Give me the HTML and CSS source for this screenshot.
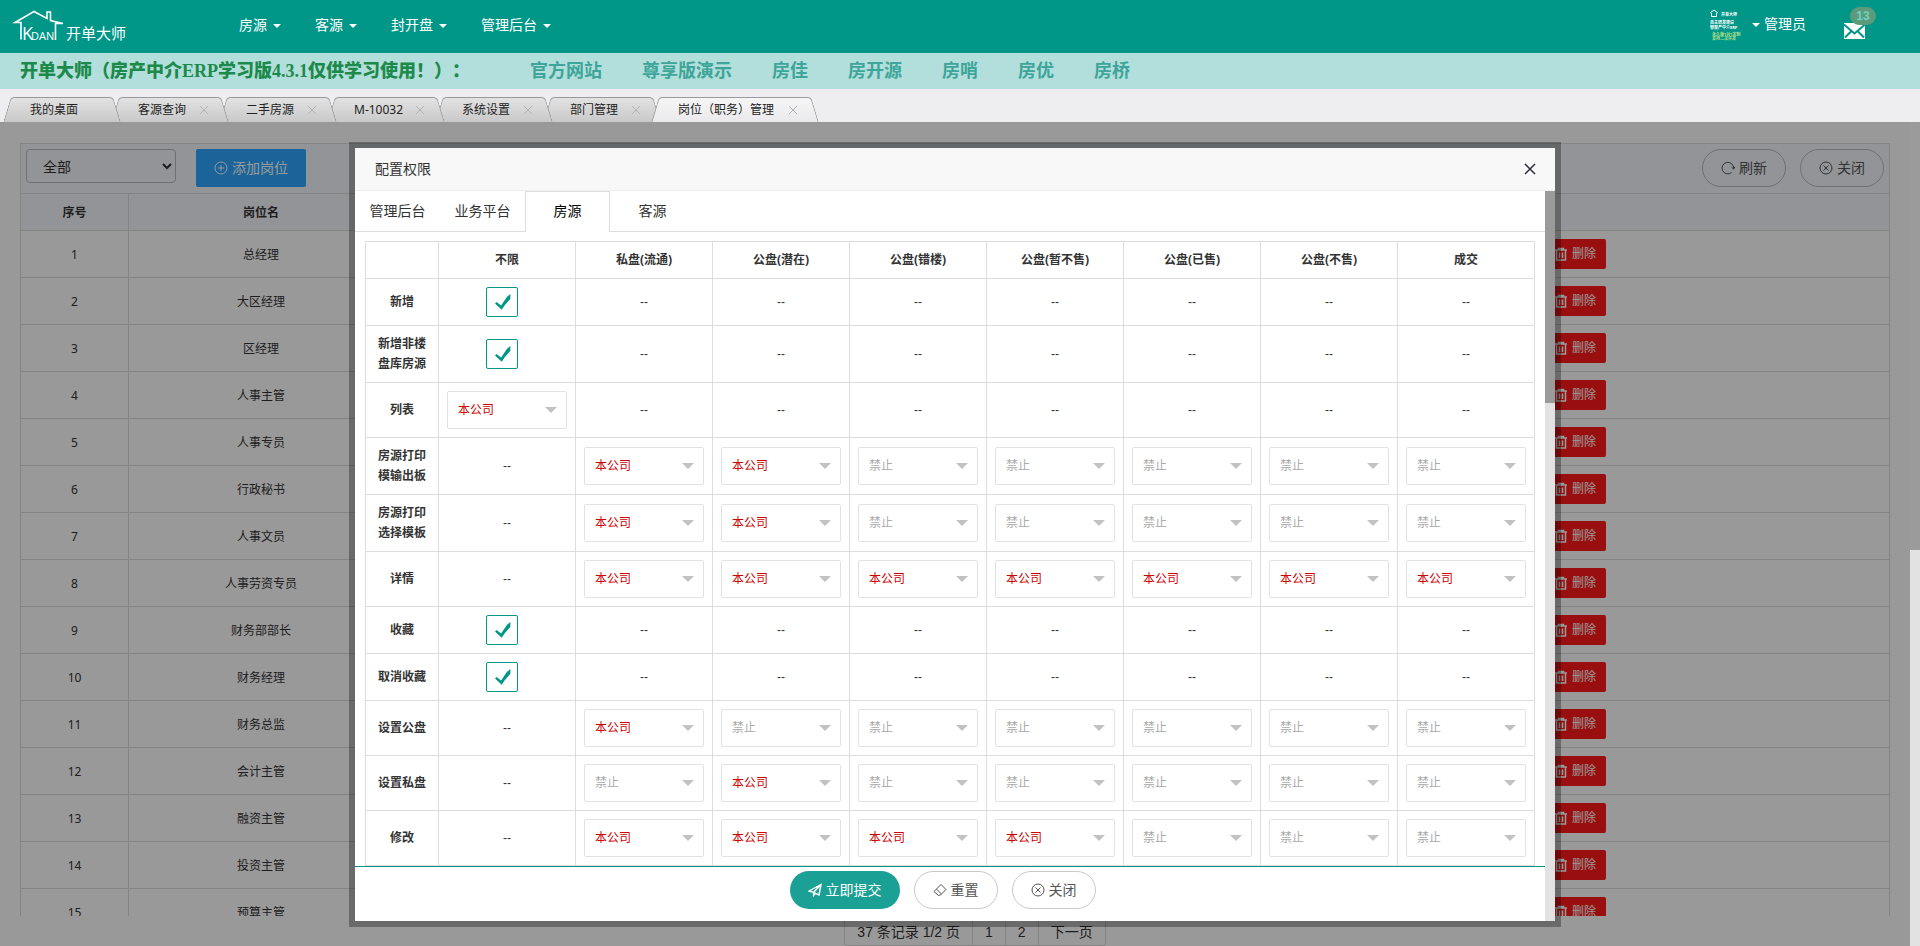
FILE: index.html
```html
<!DOCTYPE html>
<html lang="zh-CN">
<head>
    <meta charset="UTF-8">
    <meta name="viewport" content="width=device-width, initial-scale=1.0">
    <title>开单大师</title>
    <link rel="stylesheet" href="styles.css">
</head>
<body>
    <svg class="sprite" aria-hidden="true">
        <symbol id="i-add" viewBox="0 0 14 14"><circle cx="7" cy="7" r="6"/><path d="M7 4v6M4 7h6"/></symbol>
        <symbol id="i-refresh" viewBox="0 0 14 14"><path d="M10.5 11.6A5.8 5.8 0 1 1 12.6 7.6M10.6 6.2l2 1.9 1.3-2.3"/></symbol>
        <symbol id="i-close" viewBox="0 0 14 14"><circle cx="7" cy="7" r="6"/><path d="M4.5 4.5l5 5M9.5 4.5l-5 5"/></symbol>
        <symbol id="i-send" viewBox="0 0 14 14"><path d="M1 8L13 1.5 11 12 7.5 10.3 5.6 12.5V9.200zM5.6 9.2L13 1.5M7.5 10.3L5.6 9.2" stroke-width="1.4"/></symbol>
        <symbol id="i-reset" viewBox="0 0 14 14"><path d="M8 1.5L13 6.500 7.500 12 5.500 12.500 1 8.500zM3.500 6.200L8.500 11"/></symbol>
        <symbol id="i-trash" viewBox="0 0 14 14"><path d="M1 3h12M4.500 3V1.500h5V3M2.500 3.500V13h9V3.500M5.500 5.500v5.500M8.500 5.500v5.500" stroke-width="1.5"/></symbol>
    </svg>

    <header class="header">
        <a class="logo" href="#">
            <svg width="50" height="34" viewBox="0 0 50 34">
                <path d="M7 30.500V13.500H1L20 2.500 33 9.500V3h3.500v8.500L49 14.500H41.500V31" fill="none" stroke="#fff" stroke-width="1.600"/>
                <text x="8" y="31" class="logo-en">K</text>
                <text x="17" y="31" class="logo-en-sm">DAN</text>
            </svg>
            <span>开单大师</span>
        </a>
        <nav class="nav">
            <a href="#">房源<i class="caret"></i></a>
            <a href="#">客源<i class="caret"></i></a>
            <a href="#">封开盘<i class="caret"></i></a>
            <a href="#">管理后台<i class="caret"></i></a>
        </nav>
        <div class="user">
            <svg class="avatar" width="32" height="32" viewBox="0 0 32 32">
                <path d="M1 4l4-3 4 3M2.500 4v3.500h5V4" fill="none" stroke="#fff"/>
                <text x="12" y="7" class="a4">开单大师</text>
                <text x="1" y="15" class="a4">自主研发建设</text>
                <text x="1" y="20" class="a4">智能产中介ERP</text>
                <text x="3" y="27" class="a4 y">永久版1对1定制</text>
                <text x="3" y="31" class="a4 y">支持二次开发</text>
            </svg>
            <a href="#"><i class="caret"></i>管理员</a>
            <a class="mail" href="#" aria-label="消息">
                <svg width="21" height="16" viewBox="0 0 21 16"><path d="M0 0h21v16H0z" fill="#fff"/><path d="M0 1.500l10.500 9 10.500-9M1 14.500l6-6M20 14.500l-6-6" fill="none" stroke="#009688" stroke-width="2"/></svg>
                <span class="badge">13</span>
            </a>
        </div>
    </header>

    <div class="notice">
        <strong>开单大师（房产中介ERP学习版4.3.1仅供学习使用！）：</strong>
        <a href="#">官方网站</a>
        <a href="#">尊享版演示</a>
        <a href="#">房佳</a>
        <a href="#">房开源</a>
        <a href="#">房哨</a>
        <a href="#">房优</a>
        <a href="#">房桥</a>
    </div>

    <div class="tabs">
        <div class="tab"><span>我的桌面</span></div>
        <div class="tab"><span>客源查询</span><button type="button" aria-label="关闭标签"></button></div>
        <div class="tab"><span>二手房源</span><button type="button" aria-label="关闭标签"></button></div>
        <div class="tab"><span>M-10032</span><button type="button" aria-label="关闭标签"></button></div>
        <div class="tab"><span>系统设置</span><button type="button" aria-label="关闭标签"></button></div>
        <div class="tab"><span>部门管理</span><button type="button" aria-label="关闭标签"></button></div>
        <div class="tab active"><span>岗位（职务）管理</span><button type="button" aria-label="关闭标签"></button></div>
    </div>

    <main class="main">
        <div class="frame">
            <div class="page">
                <div class="toolbar">
                    <select aria-label="部门"><option>全部</option></select>
                    <button type="button" class="btn btn-blue"><svg class="icon"><use href="#i-add"/></svg>添加岗位</button>
                    <div class="toolbar-right">
                        <button type="button" class="btn btn-round"><svg class="icon"><use href="#i-refresh"/></svg>刷新</button>
                        <button type="button" class="btn btn-round"><svg class="icon"><use href="#i-close"/></svg>关闭</button>
                    </div>
                </div>
                <div class="list">
                    <table>
                        <thead>
                            <tr><th class="c-no">序号</th><th class="c-name">岗位名</th><th></th><th class="c-op"></th></tr>
                        </thead>
                        <tbody id="jobs"></tbody>
                    </table>
                </div>
                <div class="pager">
                    <span>37 条记录 1/2 页</span><a href="#">1</a><a href="#">2</a><a href="#">下一页</a>
                </div>
            </div>

            <div class="shade">
                <div class="layer">
                    <div class="layer-title">
                        配置权限
                        <button type="button" class="layer-close" aria-label="关闭"><svg width="12" height="12" viewBox="0 0 12 12"><path d="M1 1l10 10M11 1L1 11" stroke="#2d2d3a" stroke-width="1.500"/></svg></button>
                    </div>
                    <div class="layer-body">
                        <form class="perm">
                            <div class="perm-tabs">
                                <a href="#">管理后台</a>
                                <a href="#">业务平台</a>
                                <a href="#" class="on">房源</a>
                                <a href="#">客源</a>
                            </div>
                            <div class="perm-list">
                                <table>
                                    <thead>
                                        <tr>
                                            <th class="c-item"></th><th>不限</th><th>私盘(流通)</th><th>公盘(潜在)</th><th>公盘(错楼)</th><th>公盘(暂不售)</th><th>公盘(已售)</th><th>公盘(不售)</th><th>成交</th>
                                        </tr>
                                    </thead>
                                    <tbody id="perms"></tbody>
                                </table>
                            </div>
                            <div class="perm-foot">
                                <button type="button" class="btn btn-submit"><svg class="icon"><use href="#i-send"/></svg>立即提交</button>
                                <button type="reset" class="btn btn-round"><svg class="icon"><use href="#i-reset"/></svg>重置</button>
                                <button type="button" class="btn btn-round"><svg class="icon"><use href="#i-close"/></svg>关闭</button>
                            </div>
                        </form>
                        <div class="bar"><div class="bar-thumb layer-thumb"></div></div>
                    </div>
                </div>
            </div>
        </div>
        <div class="bar"><div class="bar-thumb page-thumb"></div></div>
    </main>

    <script>
        const jobs = ['总经理', '大区经理', '区经理', '人事主管', '人事专员', '行政秘书', '人事文员', '人事劳资专员',
            '财务部部长', '财务经理', '财务总监', '会计主管', '融资主管', '投资主管', '预算主管'];

        // v: 勾选  -: 无  1: 本公司  0: 禁止
        const perms = [
            ['新增', 'v-------'],
            ['新增非楼盘库房源', 'v-------'],
            ['列表', '1-------'],
            ['房源打印模输出板', '-1100000'],
            ['房源打印选择模板', '-1100000'],
            ['详情', '-1111111'],
            ['收藏', 'v-------'],
            ['取消收藏', 'v-------'],
            ['设置公盘', '-1000000'],
            ['设置私盘', '-0100000'],
            ['修改', '-1111000']
        ];

        function cell(type, name) {
            if (type === '-') return '<td>--</td>';
            if (type === 'v') return `<td><input type="checkbox" aria-label="${name}" checked></td>`;
            const on = type === '1';
            return `<td><div class="pick"><select aria-label="${name}" class="${on ? 'own' : ''}">
                <option ${on ? 'selected' : ''}>本公司</option><option ${on ? '' : 'selected'}>禁止</option>
            </select></div></td>`;
        }

        document.getElementById('jobs').innerHTML = jobs.map((job, i) => `<tr>
            <td>${i + 1}</td><td>${job}</td><td></td>
            <td class="c-op"><button type="button" class="btn-del"><svg class="icon"><use href="#i-trash"/></svg>删除</button></td>
        </tr>`).join('');

        document.getElementById('perms').innerHTML = perms.map(([name, row]) =>
            `<tr><th>${name}</th>${[...row].map(t => cell(t, name)).join('')}</tr>`).join('');
    </script>
</body>
</html>
```
FILE: styles.css
```css
* {
    box-sizing: border-box;
}
body {
    margin: 0;
    height: 100vh;
    display: flex;
    flex-direction: column;
    overflow: hidden;
    font: 14px/20px "Noto Sans", "Noto Sans CJK SC", sans-serif;
    color: #333;
}
a {
    color: inherit;
    text-decoration: none;
}
button, select, input {
    font: inherit;
    color: inherit;
    margin: 0;
}
button {
    cursor: pointer;
}
table {
    width: 100%;
    border-collapse: collapse;
    table-layout: fixed;
    font-size: 12px;
}
th, td {
    border: 1px solid #ddd;
    text-align: center;
}
.sprite {
    display: none;
}
.icon {
    width: 14px;
    height: 14px;
    flex: none;
    fill: none;
    stroke: currentColor;
}

/* 顶部 */
.header {
    flex: none;
    height: 53px;
    display: flex;
    background: #009688;
    color: #fff;
}
.logo {
    width: 222px;
    padding: 9px 0 0 14px;
    display: flex;
    gap: 2px;
    font-size: 15px;
}
.logo svg {
    overflow: visible;
}
.logo span {
    padding-top: 14px;
}
.logo-en, .logo-en-sm {
    font: 18px/20px "Open Sans", sans-serif;
    fill: #fff;
}
.logo-en-sm {
    font-size: 11px;
}
.nav {
    display: flex;
    flex: 1;
}
.nav a {
    padding: 15px 17px;
}
.caret {
    display: inline-block;
    border: 4px solid transparent;
    border-top-color: #fff;
    border-bottom: 0;
    margin-left: 6px;
    vertical-align: 2px;
}
.user {
    display: flex;
    align-items: flex-start;
    padding: 9px 55px 0 0;
}
.user a {
    margin: 5px 38px 0 11px;
}
.user .caret {
    margin: 0 4px 0 0;
}
.user .mail {
    position: relative;
    margin: 14px 0 0;
}
.mail svg {
    display: block;
}
.badge {
    position: absolute;
    left: 6px;
    bottom: 14px;
    width: 26px;
    height: 18px;
    border-radius: 9px;
    background: #5b9b7b;
    color: #6fd0c0;
    font: bold 12px/18px "Liberation Sans", sans-serif;
    text-align: center;
}
.a4 {
    font-size: 4px;
    font-weight: bold;
    fill: #fff;
}
.a4.y {
    fill: #b5e08c;
}

/* 公告 */
.notice {
    flex: none;
    height: 36px;
    padding-left: 20px;
    display: flex;
    gap: 40px;
    background: #b2dfdb;
    font: bold 18px/36px "Liberation Serif", "Noto Sans CJK SC", serif;
    text-spacing-trim: space-all;
    color: #3da599;
    white-space: nowrap;
}
.notice strong {
    color: #1d8a4c;
    margin-right: 20px;
}

/* 标签栏 */
.tabs {
    flex: none;
    height: 33px;
    padding: 8px 0 0 3px;
    display: flex;
    background: #eeeef0;
    font-size: 12px;
    color: #222;
}
.tab {
    position: relative;
    width: 118px;
    margin-right: -10px;
    padding: 0 21px 0 27px;
    display: flex;
    justify-content: space-between;
    align-items: center;
    white-space: nowrap;
}
.tab:nth-child(1) { z-index: 6; }
.tab:nth-child(2) { z-index: 5; }
.tab:nth-child(3) { z-index: 4; }
.tab:nth-child(4) { z-index: 3; }
.tab:nth-child(5) { z-index: 2; }
.tab:nth-child(6) { z-index: 1; }
.tab::before, .tab::after {
    content: "";
    position: absolute;
    z-index: -1;
    top: 0;
    bottom: 0;
    left: 4px;
    width: 60%;
    background: linear-gradient(#e2e2e2, #c9c9c9);
    border: 1px solid #999;
    border-width: 1px 0 0 1px;
    border-top-left-radius: 4px;
    transform: skewX(-17deg);
}
.tab::after {
    left: auto;
    right: 4px;
    border-width: 1px 1px 0 0;
    border-radius: 0 4px 0 0;
    transform: skewX(17deg);
}
.tab.active {
    width: 168px;
    padding-right: 22px;
    z-index: 7;
}
.tab.active::before, .tab.active::after {
    background: linear-gradient(#f6f6f6, #eaeaec);
}
.tab button {
    width: 8px;
    height: 8px;
    padding: 0;
    border: 0;
    background: linear-gradient(45deg, transparent 44%, #b0b4b8 44%, #b0b4b8 56%, transparent 56%),
        linear-gradient(-45deg, transparent 44%, #b0b4b8 44%, #b0b4b8 56%, transparent 56%);
}

/* 内容区 */
.main {
    flex: 1;
    min-height: 0;
    display: flex;
}
.frame {
    position: relative;
    flex: 1;
    min-width: 0;
}
.bar {
    flex: none;
    width: 10px;
    background: #e2e2e2;
}
.bar-thumb {
    background: #9b9b9b;
}
.page-thumb {
    height: 52%;
}
.layer-thumb {
    height: 29%;
}
.page {
    height: 100%;
    padding: 21px 20px 0;
    display: flex;
    flex-direction: column;
}
.toolbar {
    flex: none;
    height: 50px;
    padding: 5px 5px 0;
    display: flex;
    align-items: flex-start;
    gap: 20px;
    background: #f3f7fc;
    border: 1px solid #ddd;
    border-bottom: 0;
}
.toolbar select {
    width: 150px;
    height: 34px;
    padding: 0 12px;
    border: 1px solid #bbb;
    border-radius: 4px;
    background: transparent;
}
.toolbar-right {
    margin-left: auto;
    display: flex;
    gap: 14px;
}
.btn {
    height: 38px;
    padding: 0 18px;
    display: flex;
    align-items: center;
    gap: 4px;
    border: 0;
    border-radius: 2px;
    color: #fff;
    white-space: nowrap;
}
.btn-blue {
    background: #2ca7ff;
}
.btn-round {
    border: 1px solid #c9c9c9;
    border-radius: 19px;
    background: #fff;
    color: #555;
}
.toolbar .btn-round {
    background: transparent;
    border-color: #bbb;
}
.btn-submit {
    border-radius: 19px;
    background: #1aa094;
}
.list {
    flex: 1;
    min-height: 0;
    overflow: hidden;
}
.list th {
    height: 37px;
    padding: 2px 0 0;
    background: #f3f7fc;
}
.list td {
    height: 47px;
    padding: 2px 0 0;
}
.list th:nth-child(n+3), .list td:nth-child(n+3) {
    border-left-color: transparent;
}
.c-no {
    width: 108px;
}
.c-name {
    width: 265px;
}
.list .c-op {
    width: 356px;
    padding: 0 0 0 10px;
    text-align: left;
}
.btn-del {
    height: 30px;
    padding: 0 10px;
    display: flex;
    align-items: center;
    gap: 4px;
    border: 0;
    border-radius: 2px;
    background: #ff1a1a;
    color: #fff;
}
.pager {
    flex: none;
    height: 30px;
    padding: 1px 0 0 40px;
    display: flex;
    justify-content: center;
    font-family: "Liberation Sans", "Noto Sans CJK SC", sans-serif;
    line-height: 28px;
}
.pager > * {
    border: 1px solid #ddd;
    border-left-width: 0;
    padding: 0 12px;
}
.pager > :first-child {
    border-left-width: 1px;
    border-radius: 0 0 0 3px;
}
.pager > :last-child {
    border-radius: 0 0 3px 0;
}

/* 弹层 */
.shade {
    position: absolute;
    inset: 0;
    padding: 26px 0 25px;
    display: flex;
    justify-content: center;
    background: rgba(0, 0, 0, 0.4);
}
.layer {
    width: 1200px;
    max-width: 96%;
    height: 100%;
    display: flex;
    flex-direction: column;
    background: #fff;
    box-shadow: 0 0 0 6px rgba(0, 0, 0, 0.3);
}
.layer-title {
    flex: none;
    height: 43px;
    padding: 0 19px 0 20px;
    display: flex;
    align-items: center;
    justify-content: space-between;
    background: #f8f8f8;
    border-bottom: 1px solid #eee;
}
.layer-close {
    padding: 0;
    border: 0;
    background: none;
    line-height: 0;
}
.layer-body {
    flex: 1;
    min-height: 0;
    display: flex;
}
.perm {
    flex: 1;
    min-width: 0;
    display: flex;
    flex-direction: column;
}
.perm-tabs {
    flex: none;
    display: flex;
    height: 41px;
    border-bottom: 1px solid #ddd;
}
.perm-tabs a {
    width: 85px;
    height: 41px;
    line-height: 40px;
    text-align: center;
}
.perm-tabs .on {
    line-height: 38px;
    border: 1px solid #ddd;
    border-bottom: 0;
    background: #fff;
    color: #000;
}
.perm-list {
    flex: 1;
    min-height: 0;
    overflow: hidden;
    padding: 9px 10px 0;
}
.perm-list th, .perm-list td {
    padding: 8px;
    line-height: 20px;
}
.perm-list td {
    font-family: "Liberation Sans", "Noto Sans CJK SC", sans-serif;
}
.perm-list tbody th {
    padding: 8px 12px;
}
.c-item {
    width: 73px;
}
.pick {
    position: relative;
}
.pick::after {
    content: "";
    position: absolute;
    right: 10px;
    top: 16px;
    border: 6px solid transparent;
    border-top-color: #c2c2c2;
    border-bottom: 0;
    pointer-events: none;
}
.pick select {
    display: block;
    width: 100%;
    height: 38px;
    padding: 0 10px;
    appearance: none;
    border: 1px solid #e2e2e2;
    border-radius: 2px;
    background: #fff;
    color: #aaa;
}
.pick .own {
    color: #c00;
}
.perm-list input {
    appearance: none;
    display: block;
    width: 32px;
    height: 30px;
    margin: 0 auto;
    position: relative;
    right: 5px;
    border: 1px solid #009688;
    border-radius: 2px;
}
.perm-list input:checked::after {
    content: "";
    display: block;
    width: 16px;
    height: 16px;
    margin: 6px 0 0 8px;
    background: #009688;
    clip-path: polygon(0 60%, 10% 50%, 38% 72%, 74% 18%, 96% 0, 96% 30%, 62% 68%, 42% 98%);
}
.perm-foot {
    flex: none;
    height: 55px;
    padding: 4px 15px 0 0;
    display: flex;
    justify-content: center;
    align-items: flex-start;
    gap: 14px;
    border-top: 1px solid #009688;
}
```
